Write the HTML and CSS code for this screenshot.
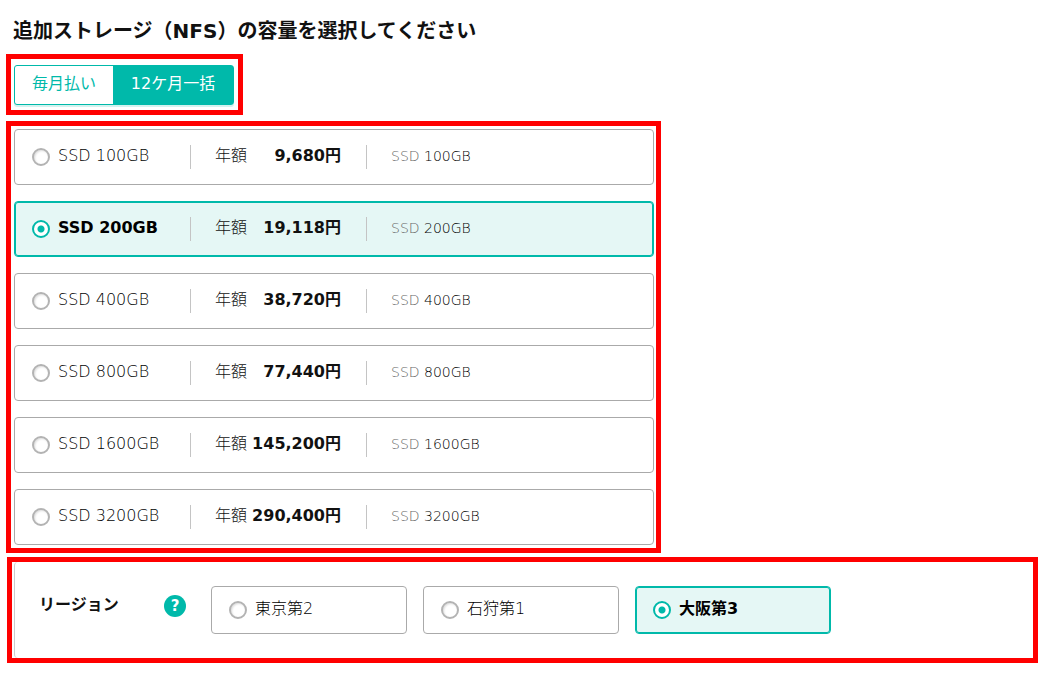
FILE: index.html
```html
<!DOCTYPE html>
<html lang="ja">
<head>
<meta charset="utf-8">
<meta name="viewport" content="width=device-width, initial-scale=1">
<title>追加ストレージ（NFS）</title>
<link rel="stylesheet" href="styles.css">
</head>
<body>
<main class="page">
  <h1 class="title">追加ストレージ（NFS）の容量を選択してください</h1>

  <div class="frame frame-toggle">
    <div class="toggle">
      <button type="button" class="toggle-item" aria-pressed="false">毎月払い</button>
      <button type="button" class="toggle-item is-active" aria-pressed="true">12ケ月一括</button>
    </div>
  </div>

  <div class="frame frame-plans">
    <label class="card plan"><input class="radio" type="radio" name="plan"><span class="name">SSD 100GB</span><span class="price"><span>年額</span><strong>9,680円</strong></span><span class="desc"><span class="muted">SSD</span> 100GB</span></label>
    <label class="card plan"><input class="radio" type="radio" name="plan" checked><span class="name">SSD 200GB</span><span class="price"><span>年額</span><strong>19,118円</strong></span><span class="desc"><span class="muted">SSD</span> 200GB</span></label>
    <label class="card plan"><input class="radio" type="radio" name="plan"><span class="name">SSD 400GB</span><span class="price"><span>年額</span><strong>38,720円</strong></span><span class="desc"><span class="muted">SSD</span> 400GB</span></label>
    <label class="card plan"><input class="radio" type="radio" name="plan"><span class="name">SSD 800GB</span><span class="price"><span>年額</span><strong>77,440円</strong></span><span class="desc"><span class="muted">SSD</span> 800GB</span></label>
    <label class="card plan"><input class="radio" type="radio" name="plan"><span class="name">SSD 1600GB</span><span class="price"><span>年額</span><strong>145,200円</strong></span><span class="desc"><span class="muted">SSD</span> 1600GB</span></label>
    <label class="card plan"><input class="radio" type="radio" name="plan"><span class="name">SSD 3200GB</span><span class="price"><span>年額</span><strong>290,400円</strong></span><span class="desc"><span class="muted">SSD</span> 3200GB</span></label>
  </div>

  <div class="frame frame-region">
    <section class="region">
      <h2 class="region-title">リージョン</h2>
      <button type="button" class="help">?</button>
      <div class="region-options">
        <label class="card zone"><input class="radio" type="radio" name="zone"><span class="name">東京第2</span></label>
        <label class="card zone"><input class="radio" type="radio" name="zone"><span class="name">石狩第1</span></label>
        <label class="card zone"><input class="radio" type="radio" name="zone" checked><span class="name">大阪第3</span></label>
      </div>
    </section>
  </div>
</main>
</body>
</html>
```
FILE: styles.css
```css
* {
  box-sizing: border-box;
}

body {
  margin: 0;
  background: #fff;
  color: #111;
  font-family: "DejaVu Sans", "Noto Sans CJK JP", sans-serif;
  font-size: 16px;
  font-weight: 300;
  line-height: 24px;
}

.page {
  padding: 16px 14px 13px 6px;
}

.title {
  margin: 0 0 8px;
  padding-left: 7px;
  font-size: 20px;
  line-height: 30px;
}

.frame {
  border: 5px solid #f00;
}

.frame-toggle {
  width: fit-content;
  margin-bottom: 6px;
  padding: 6px 4px 5px 3px;
}

.toggle {
  display: flex;
  border: 1px solid #00b9aa;
  border-radius: 3px;
  background: #fff;
  box-shadow: 0 2px 0 #d4f2ef;
}

.toggle-item {
  width: 120px;
  height: 38px;
  padding: 0 0 3px;
  border: 0;
  background: none;
  color: #00b9aa;
  font: inherit;
  font-weight: 400;
  cursor: pointer;
}

.toggle-item:first-child {
  width: 98px;
}

.toggle-item.is-active {
  background: #00b9aa;
  color: #fff;
}

.frame-plans {
  display: grid;
  gap: 16px;
  max-width: 655px;
  margin-bottom: 4px;
  padding: 3px 2px 3px 3px;
}

.card {
  display: flex;
  align-items: center;
  padding: 0 17px;
  border: 1px solid #aaa;
  border-radius: 4px;
  background: #fff;
  cursor: pointer;
}

.card:has(:checked) {
  border-color: #00b9aa;
  background: #e5f7f5;
  box-shadow: inset 0 0 0 1px #00b9aa;
}

.card:has(:checked) .name {
  font-weight: 700;
}

.plan {
  min-height: 56px;
}

.radio {
  flex: none;
  appearance: none;
  width: 18px;
  height: 18px;
  margin: 0 8px 0 0;
  border: 2px solid #b3b3b3;
  border-radius: 50%;
  background: #fff;
  box-shadow: inset 1px 1px 2px #ddd;
}

.radio:checked {
  border-color: #00b9aa;
  background: radial-gradient(circle, #00b9aa 3px, #fff 4px);
  box-shadow: none;
}

.name {
  padding-bottom: 2px;
  color: #000;
}

.plan .name {
  flex: none;
  width: 132px;
}

.price,
.desc {
  height: 24px;
  padding-left: 24px;
  border-left: 1px solid #c4c4c4;
  line-height: 22px;
}

.price {
  display: flex;
  flex: none;
  justify-content: space-between;
  width: 176px;
  padding-right: 25px;
}

.price strong {
  font-weight: 700;
}

.desc {
  color: #000;
  font-size: 14px;
}

.muted {
  color: #666;
}

.frame-region {
  margin-left: 1px;
  padding-left: 2px;
}

.region {
  display: flex;
  align-items: center;
  padding: 24px;
  border-left: 1px solid #ccc;
  border-radius: 4px;
}

.region-title {
  width: 125px;
  margin: 0;
  padding-bottom: 10px;
  font-size: 16px;
  line-height: 24px;
}

.help {
  flex: none;
  width: 22px;
  height: 22px;
  margin: 0 25px 8px 0;
  padding: 0;
  border: 0;
  border-radius: 50%;
  background: #00b9aa;
  color: #fff;
  font: 700 15px/22px "DejaVu Sans", sans-serif;
  cursor: pointer;
}

.region-options {
  display: flex;
  flex: 1;
  flex-wrap: wrap;
  gap: 16px;
}

.zone {
  width: 196px;
  min-height: 48px;
}
```
